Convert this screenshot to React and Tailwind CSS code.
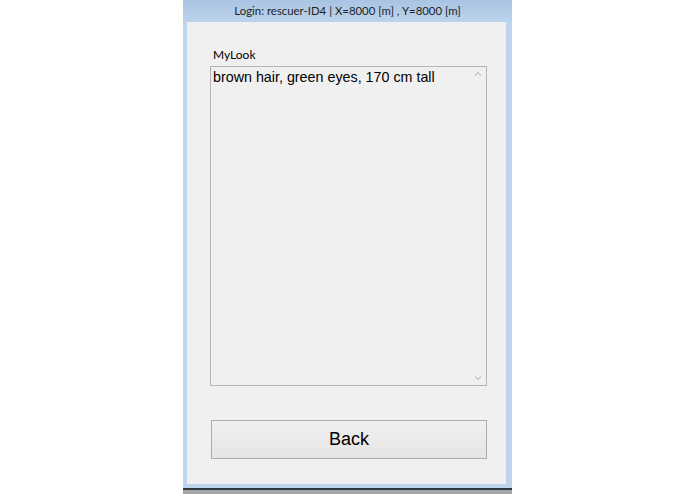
import React from "react";

export default function App() {
  return (
    <div className="w-[695px] h-[494px] bg-white overflow-hidden">
      <div className="ml-[183px] w-[329px] h-[494px] flex flex-col bg-[#bfd5ec]">
        <div
          className="h-[22px] flex items-center justify-center bg-gradient-to-b from-[#a9c4e2] to-[#bcd3ec] text-[11.4px] text-[#1e1e1e]"
          style={{ fontFamily: 'Lato, "Noto Sans", sans-serif' }}
        >
          Login: rescuer-ID4 | X=8000 [m] , Y=8000 [m]
        </div>
        <div className="ml-[4px] mr-[6px] h-[462px] bg-[#f0f0f0] flex flex-col pl-[23px]">
          <div
            className="mt-[24px] h-[20px] pl-[3px] text-[12px] text-black"
            style={{ fontFamily: 'Lato, "Noto Sans", sans-serif' }}
          >
            MyLook
          </div>
          <div className="relative w-[277px] h-[320px] border border-[#b4b4b4] bg-[#f0f0f0]">
            <div
              className="pl-[2px] pt-[1px] text-[14.3px] leading-[18px] text-black"
              style={{ fontFamily: '"Liberation Sans", Arial, sans-serif' }}
            >
              brown hair, green eyes, 170 cm tall
            </div>
            <div className="absolute right-0 top-0 bottom-0 w-[16px] flex flex-col justify-between items-center py-[4px]">
              <svg width="8" height="6" viewBox="0 0 8 6">
                <path d="M1 4.5 L4 1.5 L7 4.5" fill="none" stroke="#c4c4c4" strokeWidth="1.2" />
              </svg>
              <svg width="8" height="6" viewBox="0 0 8 6">
                <path d="M1 1.5 L4 4.5 L7 1.5" fill="none" stroke="#c4c4c4" strokeWidth="1.2" />
              </svg>
            </div>
          </div>
          <button
            className="mt-[34px] ml-[1px] w-[276px] h-[39px] border border-[#acacac] bg-gradient-to-b from-[#f0f0f0] to-[#e5e5e5] text-[18px] text-black"
            style={{ fontFamily: '"Liberation Sans", Arial, sans-serif' }}
          >
            Back
          </button>
        </div>
        <div className="h-[4px]"></div>
        <div className="h-[2px] bg-[#2e3a40]"></div>
        <div className="flex-1 bg-[#a5a5a5]"></div>
      </div>
    </div>
  );
}
